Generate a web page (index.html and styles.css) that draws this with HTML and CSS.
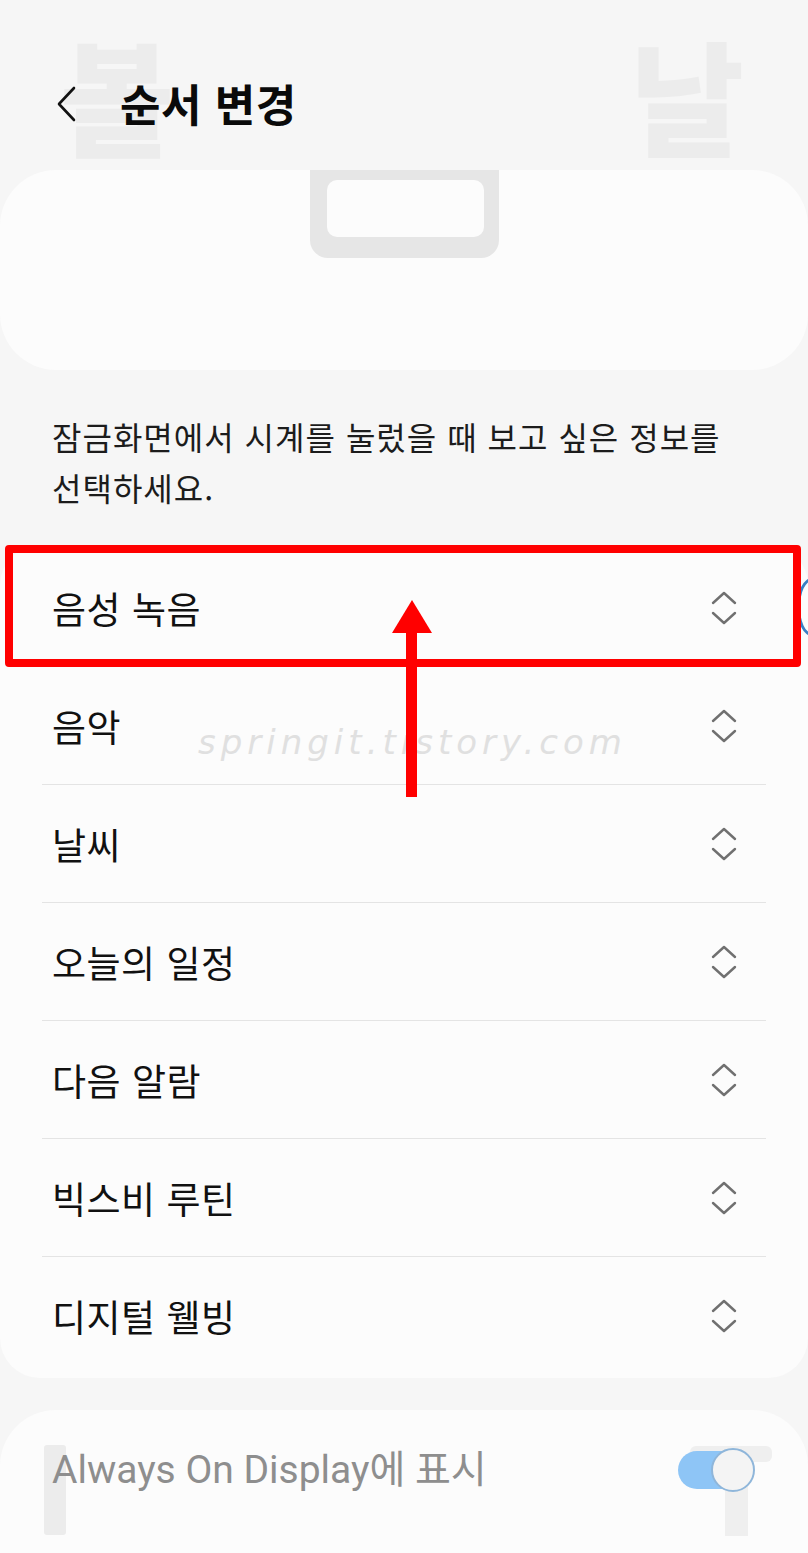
FILE: index.html
```html
<!DOCTYPE html>
<html lang="ko">
<head>
<meta charset="utf-8">
<link rel="stylesheet" href="styles.css">
</head>
<body>
<div class="screen">
  <span class="ghost ghost-left">볼</span>
  <span class="ghost ghost-right">날</span>

  <header class="header">
    <svg class="back" width="24" height="36" viewBox="0 0 24 36"><path d="M19 2 L4 18 L19 34" fill="none" stroke="#111" stroke-width="2.6" stroke-linecap="round" stroke-linejoin="round"/></svg>
    <h1 class="title">순서 변경</h1>
  </header>

  <section class="preview">
    <div class="ghost-box"><div class="ghost-box-inner"></div></div>
  </section>

  <p class="desc">잠금화면에서 시계를 눌렀을 때 보고 싶은 정보를<br>선택하세요.</p>

  <section class="list">
    <div class="row"><span>음성 녹음</span><svg class="chev" width="26" height="36" viewBox="0 0 26 36"><path d="M2 13 L13 3 L24 13 M2 23 L13 33 L24 23" fill="none" stroke="#707070" stroke-width="2.4" stroke-linecap="round" stroke-linejoin="round"/></svg></div>
    <div class="row"><span>음악</span><svg class="chev" width="26" height="36" viewBox="0 0 26 36"><path d="M2 13 L13 3 L24 13 M2 23 L13 33 L24 23" fill="none" stroke="#707070" stroke-width="2.4" stroke-linecap="round" stroke-linejoin="round"/></svg></div>
    <div class="row"><span>날씨</span><svg class="chev" width="26" height="36" viewBox="0 0 26 36"><path d="M2 13 L13 3 L24 13 M2 23 L13 33 L24 23" fill="none" stroke="#707070" stroke-width="2.4" stroke-linecap="round" stroke-linejoin="round"/></svg></div>
    <div class="row"><span>오늘의 일정</span><svg class="chev" width="26" height="36" viewBox="0 0 26 36"><path d="M2 13 L13 3 L24 13 M2 23 L13 33 L24 23" fill="none" stroke="#707070" stroke-width="2.4" stroke-linecap="round" stroke-linejoin="round"/></svg></div>
    <div class="row"><span>다음 알람</span><svg class="chev" width="26" height="36" viewBox="0 0 26 36"><path d="M2 13 L13 3 L24 13 M2 23 L13 33 L24 23" fill="none" stroke="#707070" stroke-width="2.4" stroke-linecap="round" stroke-linejoin="round"/></svg></div>
    <div class="row"><span>빅스비 루틴</span><svg class="chev" width="26" height="36" viewBox="0 0 26 36"><path d="M2 13 L13 3 L24 13 M2 23 L13 33 L24 23" fill="none" stroke="#707070" stroke-width="2.4" stroke-linecap="round" stroke-linejoin="round"/></svg></div>
    <div class="row"><span>디지털 웰빙</span><svg class="chev" width="26" height="36" viewBox="0 0 26 36"><path d="M2 13 L13 3 L24 13 M2 23 L13 33 L24 23" fill="none" stroke="#707070" stroke-width="2.4" stroke-linecap="round" stroke-linejoin="round"/></svg></div>
  </section>

  <section class="aod">
    <span class="ghost-bar"></span>
    <span class="ghost-t"></span>
    <span class="aod-label">Always On Display에 표시</span>
    <span class="toggle"><span class="knob"></span></span>
  </section>

  <div class="blue-arc"></div>
  <div class="red-box"></div>
  <svg class="arrow" width="44" height="200" viewBox="0 0 44 200"><polygon points="22,0 42,33 2,33" fill="#ff0000"/><rect x="16" y="30" width="11" height="167" fill="#ff0000"/></svg>
  <span class="watermark">springit.tistory.com</span>
</div>
</body>
</html>
```
FILE: styles.css
```css
* { box-sizing: border-box; }
html, body { margin: 0; padding: 0; }
body {
  background: #f6f6f6;
  font-family: "Noto Sans CJK KR", "Noto Sans", sans-serif;
  color: #111;
}
.screen {
  position: relative;
  width: 808px;
  height: 1553px;
  overflow: hidden;
  background: #f6f6f6;
}
.ghost {
  position: absolute;
  top: 8px;
  font-size: 124px;
  line-height: 170px;
  font-weight: 900;
  color: #ececec;
  z-index: 0;
}
.ghost-left { left: 60px; }
.ghost-right { left: 630px; }

.header {
  position: relative;
  z-index: 1;
  height: 170px;
  padding: 78px 0 0 55px;
  display: flex;
  align-items: flex-start;
}
.back { margin-top: 8px; margin-right: 41px; flex: none; }
.title {
  margin: 0;
  font-size: 44px;
  line-height: 50px;
  font-weight: 700;
  letter-spacing: 0.5px;
  color: #0a0a0a;
}

.preview {
  position: relative;
  height: 200px;
  background: #fcfcfc;
  border-radius: 56px;
}
.ghost-box {
  position: absolute;
  left: 310px;
  top: 0;
  width: 189px;
  height: 88px;
  background: #e6e6e6;
  border-radius: 0 0 18px 18px;
  padding: 10px 15px 0 17px;
}
.ghost-box-inner {
  height: 57px;
  background: #fcfcfc;
  border-radius: 10px;
}

.desc {
  margin: 0;
  padding: 41px 52px 0;
  font-size: 32px;
  line-height: 51px;
  letter-spacing: 1px;
  color: #1c1c1c;
}

.list {
  margin-top: 32px;
  background: #fcfcfc;
  border-radius: 40px;
  padding: 4px 42px;
}
.row {
  height: 118px;
  display: flex;
  align-items: center;
  justify-content: space-between;
  padding: 0 29px 0 10px;
  border-bottom: 1px solid #e4e4e4;
  font-size: 37px;
  letter-spacing: 0.5px;
  color: #111;
}
.row:last-child { border-bottom: none; height: 117px; }
.chev { flex: none; }

.aod {
  position: relative;
  margin-top: 32px;
  height: 200px;
  background: #fcfcfc;
  border-radius: 56px;
  display: flex;
  align-items: flex-start;
  justify-content: space-between;
  padding: 34px 58px 0 52px;
}
.ghost-bar {
  position: absolute;
  left: 44px;
  top: 35px;
  width: 22px;
  height: 90px;
  background: #ececec;
  border-radius: 3px;
}
.ghost-t {
  position: absolute;
  left: 690px;
  top: 36px;
  width: 82px;
  height: 16px;
  background: #efefef;
  border-radius: 6px;
}
.ghost-t::after {
  content: "";
  position: absolute;
  left: 35px;
  top: 0;
  width: 23px;
  height: 90px;
  background: #efefef;
}
.aod-label {
  position: relative;
  font-family: Roboto, "Noto Sans CJK KR", sans-serif;
  font-size: 39px;
  line-height: 52px;
  color: #8e8e8e;
}
.toggle {
  position: relative;
  margin-top: 7px;
  width: 72px;
  height: 38px;
  border-radius: 19px;
  background: #8ec5f6;
  flex: none;
}
.knob {
  position: absolute;
  right: -5px;
  top: -3px;
  width: 44px;
  height: 44px;
  border-radius: 50%;
  background: #f4f4f4;
  border: 2px solid #8fb6da;
}

.red-box {
  position: absolute;
  left: 5px;
  top: 545px;
  width: 796px;
  height: 122px;
  border: 8px solid #ff0000;
  border-radius: 4px;
  z-index: 3;
}
.blue-arc {
  position: absolute;
  left: 797px;
  top: 578px;
  width: 30px;
  height: 58px;
  border-radius: 50%;
  border: 3px solid #3a7fc4;
  z-index: 2;
}
.arrow {
  position: absolute;
  left: 390px;
  top: 600px;
  z-index: 4;
}
.watermark {
  position: absolute;
  left: 198px;
  top: 722px;
  font-family: "DejaVu Sans", sans-serif;
  font-style: italic;
  font-weight: 300;
  font-size: 34px;
  letter-spacing: 5px;
  color: #e0e0e0;
  z-index: 2;
}
```
